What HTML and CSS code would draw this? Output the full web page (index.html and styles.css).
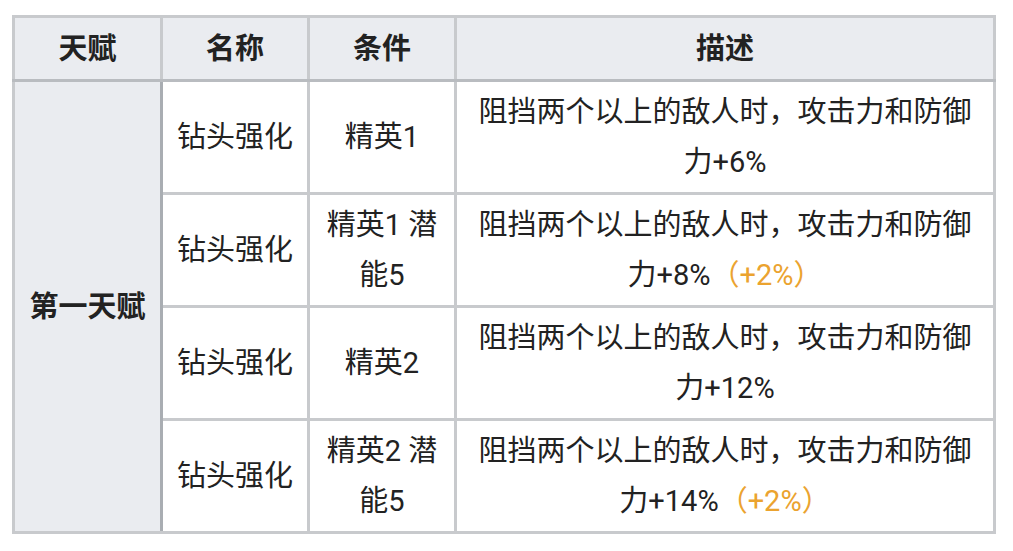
FILE: index.html
```html
<!DOCTYPE html>
<html lang="zh-CN">
<head>
<meta charset="utf-8">
<link rel="stylesheet" href="styles.css">
</head>
<body>
<table class="talent-table">
  <colgroup>
    <col class="c-talent">
    <col class="c-name">
    <col class="c-cond">
    <col class="c-desc">
  </colgroup>
  <thead>
    <tr>
      <th>天赋</th>
      <th>名称</th>
      <th>条件</th>
      <th>描述</th>
    </tr>
  </thead>
  <tbody>
    <tr>
      <th class="row-head" rowspan="4">第一天赋</th>
      <td>钻头强化</td>
      <td>精英1</td>
      <td>阻挡两个以上的敌人时，攻击力和防御力+6%</td>
    </tr>
    <tr>
      <td>钻头强化</td>
      <td>精英1 潜能5</td>
      <td>阻挡两个以上的敌人时，攻击力和防御力+8%<span class="delta">（+2%）</span></td>
    </tr>
    <tr>
      <td>钻头强化</td>
      <td>精英2</td>
      <td>阻挡两个以上的敌人时，攻击力和防御力+12%</td>
    </tr>
    <tr>
      <td>钻头强化</td>
      <td>精英2 潜能5</td>
      <td>阻挡两个以上的敌人时，攻击力和防御力+14%<span class="delta">（+2%）</span></td>
    </tr>
  </tbody>
</table>
</body>
</html>
```

FILE: styles.css
```css
html, body {
  margin: 0;
  padding: 0;
  background: #ffffff;
}

body {
  font-family: Roboto, "Noto Sans CJK SC", sans-serif;
  font-size: 29px;
  color: #222222;
}

.talent-table {
  border-collapse: collapse;
  table-layout: fixed;
  width: 984px;
  margin: 15px 0 0 12px;
  border: 3px solid #c3c6ca;
}

.c-talent { width: 148px; }
.c-name { width: 147px; }
.c-cond { width: 147px; }
.c-desc { width: 539px; }

.talent-table th,
.talent-table td {
  border: 3px solid #c8cacd;
  padding: 5px 9px;
  line-height: 50px;
  text-align: center;
  vertical-align: middle;
}

.talent-table thead th {
  background: #eaecf0;
  font-weight: bold;
  height: 51px;
  padding-top: 5px;
  padding-bottom: 5px;
  border-bottom-color: #b9bcc0;
}

.talent-table tbody td {
  height: 100px;
}

.talent-table .row-head {
  background: #eaecf0;
  font-weight: bold;
  border-right-color: #a9adb2;
}

.delta {
  color: #eba32f;
}
```
